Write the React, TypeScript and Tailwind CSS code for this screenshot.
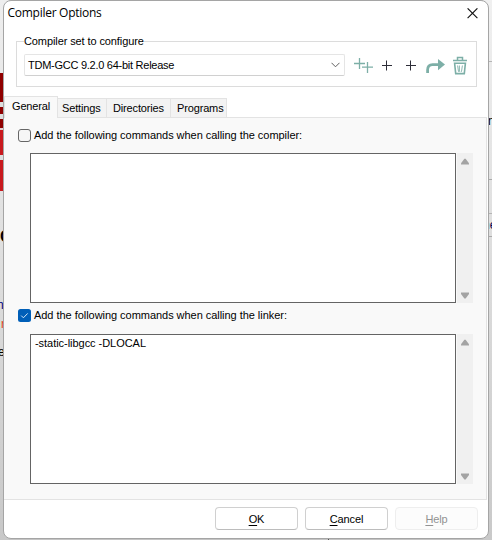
import type { ReactNode } from "react";

const ui = "font-['Liberation_Sans',Arial,sans-serif]";

function LogoSliver() {
  return (
    <div className="flex h-[118px] w-full flex-col">
      <div className="h-[29px] bg-[#8f0000]" />
      <div className="h-[5px] bg-[#dedede]" />
      <div className="h-[7px] bg-[#8f0000]" />
      <div className="h-[5px] bg-[#dedede]" />
      <div className="h-[9px] bg-[#8f0000]" />
      <div className="h-[2px] bg-[#e3cfcf]" />
      <div className="h-[25px] bg-[#c8191e]" />
      <div className="h-[5px] bg-[#dedede]" />
      <div className="h-[31px] bg-[#c8191e]" />
    </div>
  );
}

function Backdrop() {
  return (
    <div
      className={`absolute inset-0 flex overflow-hidden bg-[#c4c4c4] ${ui} text-[12px] leading-[12px] text-black`}
    >
      <div className="flex h-full w-[9px] flex-col bg-linear-to-b from-[#eeeeee] via-[#dedede] to-[#c8c8c8] pt-[73px]">
        <LogoSliver />
        <span className="mt-[38px] text-[16px] font-bold leading-[16px]">C</span>
        <span className="-ml-[3px] mt-[54px] text-[#000080]">n</span>
        <span className="ml-px mt-[7px] text-[#e84020]">r</span>
        <span className="-ml-[2px] mt-[16px]">e</span>
      </div>
      <div className="flex h-full w-[320px] flex-col items-end justify-between">
        <div className="h-px w-px bg-[#555555]" />
        <div className="h-[2px] w-px bg-[#555555]" />
      </div>
      <div className="ml-auto flex h-full w-[9px] flex-col bg-linear-to-b from-[#f0f0f0] via-[#dcdcdc] to-[#c9c9c9] pt-[61px]">
        <div className="h-px bg-[#b5b5b5]" />
        <span className="mt-[53px] pl-[5px]">n</span>
        <div className="mt-[52px] h-px bg-[#aaaaaa]" />
        <div className="mt-[33px] h-px bg-[#b5b5b5]" />
        <span className="mt-[5px] text-[#000050]">ne</span>
        <div className="mt-[5px] h-px bg-[#aaaaaa]" />
      </div>
    </div>
  );
}

function ScrollBar() {
  return (
    <div className="flex h-[150px] w-[16px] flex-col items-center justify-between bg-[#f0f0f0] pb-[4px] pt-[5px]">
      <svg width="8" height="7" viewBox="0 0 8 7">
        <path d="M3.4 .8h1.2L8 5.2V6.6H0V5.2z" fill="#a3a3a3" />
      </svg>
      <svg width="8" height="7" viewBox="0 0 8 7">
        <path d="M3.4 6.4h1.2L8 2V.6H0V2z" fill="#a3a3a3" />
      </svg>
    </div>
  );
}

function Memo({ children }: { children?: ReactNode }) {
  return (
    <div className="flex gap-px pl-[12px]">
      <div className="h-[150px] w-[426px] border border-[#646464] bg-white pl-[4px] pt-[2px] leading-[13px] tracking-[-0.04px]">
        {children}
      </div>
      <ScrollBar />
    </div>
  );
}

function CheckRow({ checked, children }: { checked?: boolean; children: ReactNode }) {
  return (
    <div className="flex h-[13px] items-center gap-[3px]">
      {checked ? (
        <svg width="13" height="13" viewBox="0 0 13 13">
          <rect width="13" height="13" rx="2.5" fill="#005fb8" />
          <path d="M3.2 6.6l2.2 2.2 4.3-4.4" fill="none" stroke="#d5e8f8" strokeWidth="1" />
        </svg>
      ) : (
        <div className="size-[13px] rounded-[3px] border border-[#666666] bg-[#f6f6f6]" />
      )}
      <span className="whitespace-nowrap leading-[13px] tracking-[-0.04px]">{children}</span>
    </div>
  );
}

function Plus() {
  return (
    <svg width="10" height="11" viewBox="0 0 10 11">
      <path d="M0 5.5h10M4.5 .5v10" stroke="#2d2d38" strokeWidth="1" />
    </svg>
  );
}

function Toolbar() {
  return (
    <div className="flex h-[22px] items-center gap-[9px]">
      <svg width="19" height="15" viewBox="0 0 19 15">
        <path d="M0 5.5h11M5.5 0v11M8 9.2h11M13.5 4v11" stroke="#7dafa7" strokeWidth="1.3" />
      </svg>
      <div className="flex gap-[14px]">
        <Plus />
        <Plus />
      </div>
      <svg className="ml-px" width="19" height="16" viewBox="0 0 19 16">
        <path d="M1.6 16v-3q0-5.4 5-5.4h6" fill="none" stroke="#7dafa7" strokeWidth="2.8" />
        <path d="M12 1.9L19 7.6l-7 5.6z" fill="#7dafa7" />
      </svg>
      <svg className="-ml-px" width="14" height="19" viewBox="0 0 14 19">
        <g fill="none" stroke="#7dafa7">
          <path d="M0 4.4h14" strokeWidth="1.5" />
          <path d="M4.5 4V1.4h5V4" strokeWidth="1.5" />
          <path d="M1.6 7.2h10.8l-1.1 10.4H2.7z" strokeWidth="1.6" />
          <path d="M4.6 9.5l.9 6h.9V9.5M9.4 9.5l-.9 6h-.7" strokeWidth=".9" />
        </g>
      </svg>
    </div>
  );
}

function CompilerSet() {
  return (
    <fieldset className="ml-[12px] mt-[8px] h-[52px] w-[461px] border border-[#dcdcdc] pl-[7px]">
      <legend className="h-[12px] whitespace-nowrap bg-white leading-[12px] tracking-[-0.1px]">
        Compiler set to configure
      </legend>
      <div className="flex gap-[9px] pt-[7px]">
        <div className="flex h-[22px] w-[321px] items-center justify-between rounded-[2px] border border-[#e5e5e5] border-b-[#d0d0d0] pl-[3px] pr-[4px]">
          <span className="whitespace-nowrap tracking-[-0.26px]">TDM-GCC 9.2.0 64-bit Release</span>
          <svg width="9" height="6" viewBox="0 0 9 6">
            <path d="M.5 .8l4 4 4-4" fill="none" stroke="#606060" strokeWidth="1" />
          </svg>
        </div>
        <Toolbar />
      </div>
    </fieldset>
  );
}

function Tabs() {
  const tab = "h-[20px] border border-l-0 border-[#e3e3e3] bg-[#f3f3f3] pt-[3px] leading-[13px]";
  return (
    <div className="relative z-10 mt-[9px] flex h-[22px] items-end tracking-[-0.15px]">
      <div className="h-[22px] w-[54px] border border-b-0 border-[#e3e3e3] bg-[#f9f9f9] pl-[7px] pt-[3px] leading-[13px]">
        General
      </div>
      <div className={`${tab} w-[49px] pl-[4px]`}>Settings</div>
      <div className={`${tab} w-[64px] pl-[6px]`}>Directories</div>
      <div className={`${tab} w-[56px] pl-[6px]`}>Programs</div>
    </div>
  );
}

function PushButton({ hotkey, rest, disabled }: { hotkey: string; rest: string; disabled?: boolean }) {
  return (
    <button
      disabled={disabled}
      className={`flex h-[23px] w-[83px] items-center justify-center rounded-[4px] border pt-[2px] ${
        disabled ? "border-[#eeeeee] bg-[#fcfcfc] text-[#929292]" : "border-[#d0d0d0] border-b-[#bcbcbc] bg-white"
      }`}
    >
      <span className="leading-[13px] tracking-[-0.1px]">
        <span className="underline underline-offset-2">{hotkey}</span>
        {rest}
      </span>
    </button>
  );
}

export default function App() {
  return (
    <div className="relative flex h-[540px] w-[492px] items-start overflow-hidden pl-[3px]">
      <Backdrop />
      <div
        className={`relative flex h-[539px] w-[486px] flex-col overflow-hidden rounded-[8px] border border-[#a5a5a5] bg-white text-[11px] text-black ${ui}`}
      >
        <header className="flex h-[26px] items-center justify-between pb-[2px] pl-[3.5px] pr-[10px]">
          <h1 className="font-['Open_Sans','Noto_Sans',sans-serif] text-[12px] leading-[16px] tracking-[-0.27px]">
            Compiler Options
          </h1>
          <svg width="11" height="11" viewBox="0 0 11 11">
            <path d="M.6 .3l9.8 9.8M10.4 .3L.6 10.1" stroke="#111111" strokeWidth="1.1" />
          </svg>
        </header>
        <CompilerSet />
        <Tabs />
        <main className="-mt-px flex h-[383px] w-[483px] flex-col gap-[6px] border border-l-0 border-[#e3e3e3] bg-[#f9f9f9] pl-[14px] pt-[11px]">
          <section className="flex flex-col gap-[11px]">
            <CheckRow>Add the following commands when calling the compiler:</CheckRow>
            <Memo />
          </section>
          <section className="flex flex-col gap-[12px]">
            <CheckRow checked>Add the following commands when calling the linker:</CheckRow>
            <Memo>-static-libgcc -DLOCAL</Memo>
          </section>
        </main>
        <footer className="flex justify-end gap-[7px] pr-[10px] pt-[7px]">
          <PushButton hotkey="O" rest="K" />
          <PushButton hotkey="C" rest="ancel" />
          <PushButton hotkey="H" rest="elp" disabled />
        </footer>
      </div>
    </div>
  );
}
